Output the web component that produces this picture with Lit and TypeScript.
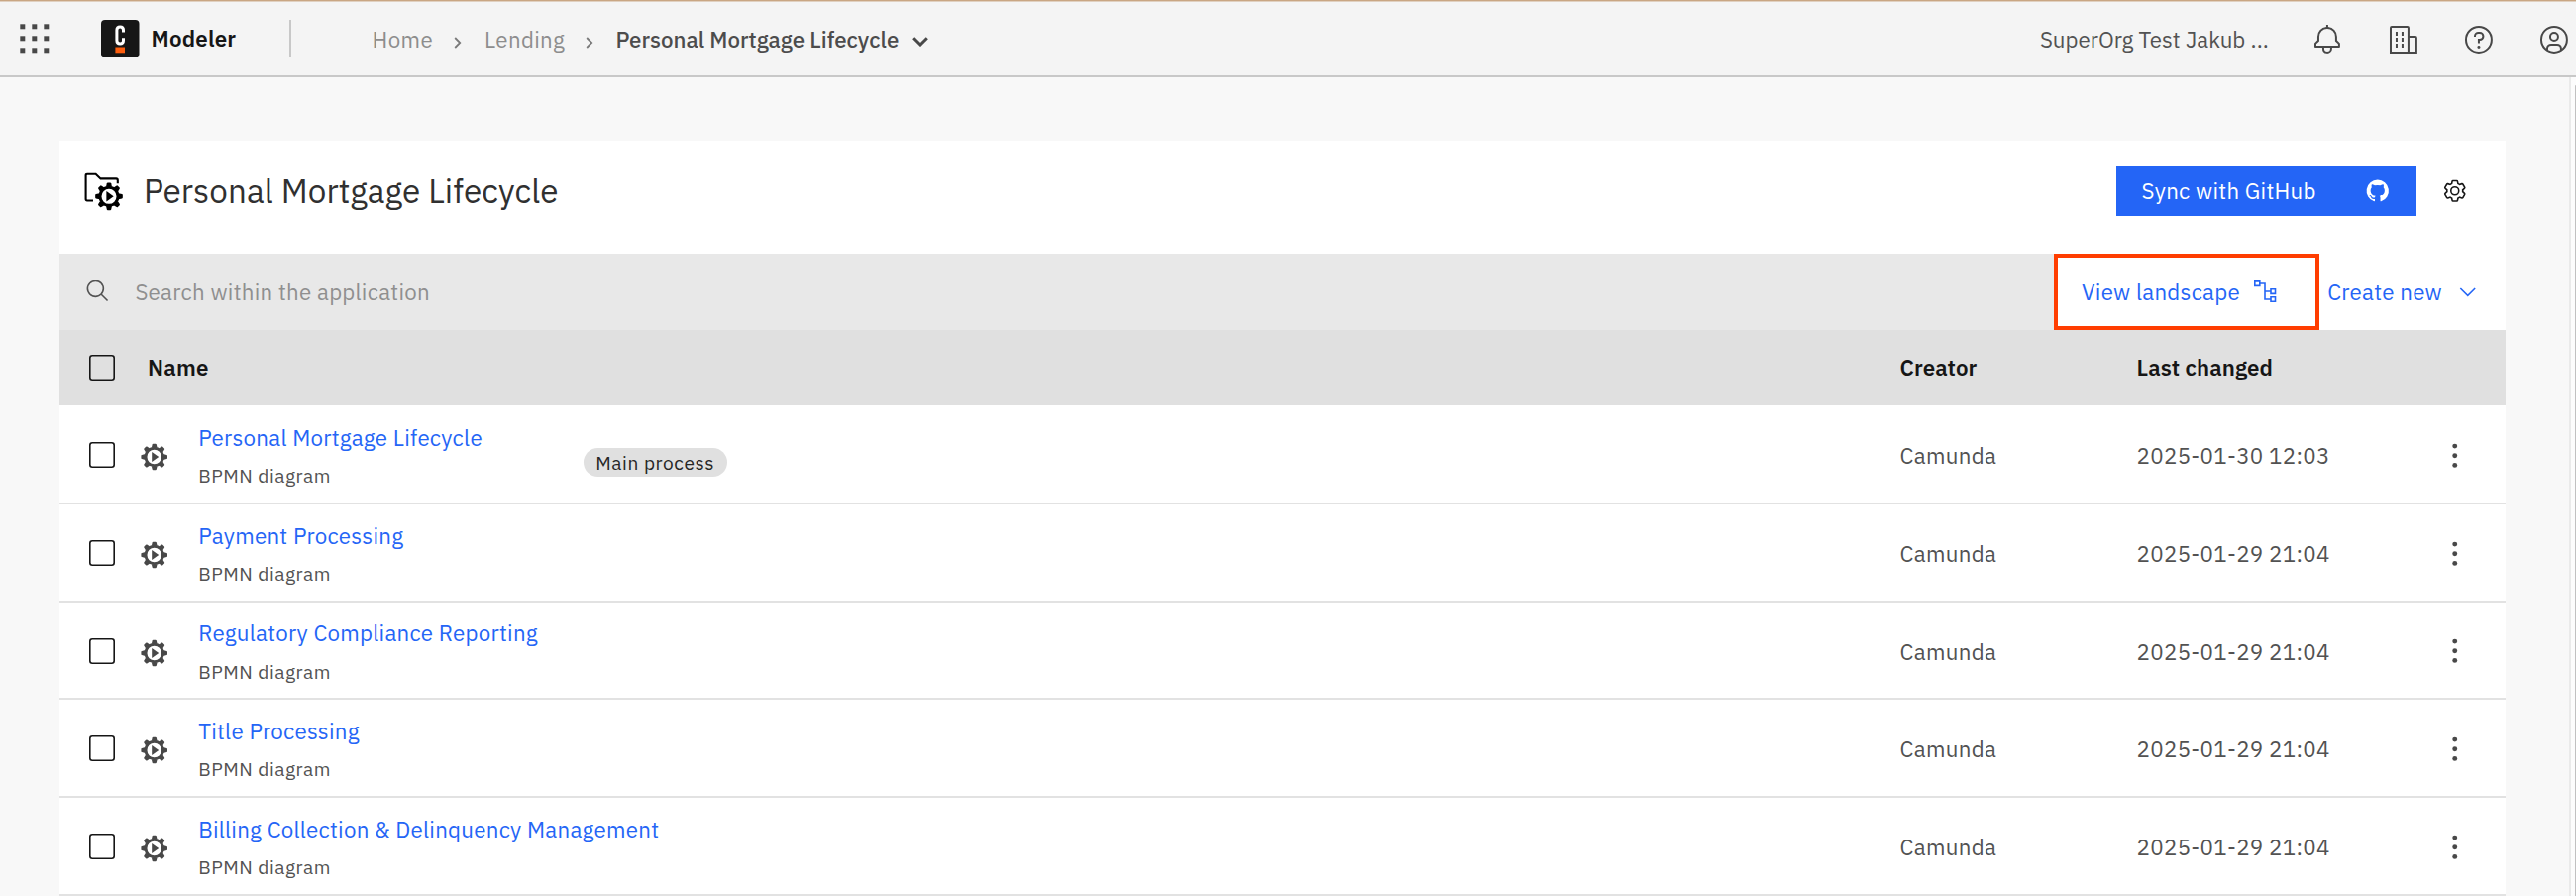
import { LitElement, html, css, svg } from 'lit';
import { customElement, property } from 'lit/decorators.js';

interface FileRow {
  name: string;
  kind: string;
  creator: string;
  changed: string;
  tag?: string;
}

const FILES: FileRow[] = [
  { name: 'Personal Mortgage Lifecycle', kind: 'BPMN diagram', creator: 'Camunda', changed: '2025-01-30 12:03', tag: 'Main process' },
  { name: 'Payment Processing', kind: 'BPMN diagram', creator: 'Camunda', changed: '2025-01-29 21:04' },
  { name: 'Regulatory Compliance Reporting', kind: 'BPMN diagram', creator: 'Camunda', changed: '2025-01-29 21:04' },
  { name: 'Title Processing', kind: 'BPMN diagram', creator: 'Camunda', changed: '2025-01-29 21:04' },
  { name: 'Billing Collection & Delinquency Management', kind: 'BPMN diagram', creator: 'Camunda', changed: '2025-01-29 21:04' },
];

const gear = (cx: number, cy: number, k: number) => svg`
  <g transform="translate(${cx} ${cy}) scale(${k})">
    <circle r="8.7" fill="none" stroke="currentColor" stroke-width="2.9"></circle>
    ${[0, 45, 90, 135, 180, 225, 270, 315].map(
      (a) => svg`<path transform="rotate(${a})" d="M-2.9 -9.2L-2.1 -12.6Q-1.9 -13.3 -1.2 -13.3H1.2Q1.9 -13.3 2.1 -12.6L2.9 -9.2Z" fill="currentColor"></path>`
    )}
    <path d="M-2.5 -5L4.5 0L-2.5 5Z" fill="currentColor"></path>
  </g>`;

const ICONS: Record<string, unknown> = {
  bell: svg`<path d="M28.7071,19.293,26,16.5859V13a10.0136,10.0136,0,0,0-9-9.9492V1H15V3.0508A10.0136,10.0136,0,0,0,6,13v3.5859L3.2929,19.293A1,1,0,0,0,3,20v3a1,1,0,0,0,1,1h7v.7768a5.152,5.152,0,0,0,4.5,5.1987A5.0057,5.0057,0,0,0,21,25V24h7a1,1,0,0,0,1-1V20A1,1,0,0,0,28.7071,19.293ZM19,25a3,3,0,0,1-6,0V24h6Zm8-3H5V20.4141L7.707,17.707A1,1,0,0,0,8,17V13a8,8,0,0,1,16,0v4a1,1,0,0,0,.293.707L27,20.4141Z"/>`,
  enterprise: svg`<path d="M8 8h2v4H8zM8 14h2v4H8zM14 8h2v4h-2zM14 14h2v4h-2zM8 20h2v4H8zM14 20h2v4h-2z"/><path d="M30,14a2,2,0,0,0-2-2H22V4a2,2,0,0,0-2-2H4A2,2,0,0,0,2,4V30H30ZM4,4H20V28H4ZM22,28V14h6V28Z"/>`,
  help: svg`<path d="M16 2a14 14 0 1 0 14 14A14 14 0 0 0 16 2zm0 26a12 12 0 1 1 12-12A12 12 0 0 1 16 28z"/><circle cx="16" cy="23.5" r="1.5"/><path d="M17 8H15.5A4.49 4.49 0 0 0 11 12.5V13h2v-.5A2.5 2.5 0 0 1 15.5 10H17a2.5 2.5 0 0 1 0 5H15v4.5h2V17a4.5 4.5 0 0 0 0-9z"/>`,
  user: svg`<path d="M16 8a5 5 0 1 0 5 5A5 5 0 0 0 16 8zm0 8a3 3 0 1 1 3-3A3 3 0 0 1 16 16z"/><path d="M16 2A14 14 0 1 0 30 16 14.0158 14.0158 0 0 0 16 2ZM10 26.3765V25a3.0033 3.0033 0 0 1 3-3h6a3.0033 3.0033 0 0 1 3 3v1.3765a11.8989 11.8989 0 0 1-12 0Zm13.9925-1.4507A5.0016 5.0016 0 0 0 19 20H13a5.0016 5.0016 0 0 0-4.9925 4.9258 12 12 0 1 1 15.985 0Z"/>`,
  github: svg`<path d="M16,2a14,14,0,0,0-4.43,27.28c.7.13,1-.3,1-.67s0-1.21,0-2.38c-3.89.84-4.71-1.88-4.71-1.88A3.71,3.71,0,0,0,6.24,22.3c-1.27-.86.1-.85.1-.85A2.94,2.94,0,0,1,8.48,22.9a3,3,0,0,0,4.08,1.16,2.93,2.93,0,0,1,.88-1.87c-3.1-.36-6.37-1.56-6.37-6.92a5.4,5.4,0,0,1,1.44-3.76,5,5,0,0,1,.14-3.7s1.17-.38,3.85,1.43a13.3,13.3,0,0,1,7,0c2.67-1.81,3.84-1.43,3.84-1.43a5,5,0,0,1,.14,3.7,5.4,5.4,0,0,1,1.44,3.76c0,5.38-3.27,6.56-6.39,6.91a3.33,3.33,0,0,1,.95,2.59c0,1.87,0,3.38,0,3.84s.25.81,1,.67A14,14,0,0,0,16,2Z"/>`,
  settings: svg`<path d="M27,16.76c0-.25,0-.5,0-.76s0-.51,0-.77l1.92-1.68A2,2,0,0,0,29.3,11L26.94,7a2,2,0,0,0-1.73-1,2,2,0,0,0-.64.1l-2.43.82a11.35,11.35,0,0,0-1.31-.75l-.51-2.52a2,2,0,0,0-2-1.61H13.64a2,2,0,0,0-2,1.61l-.51,2.52a11.48,11.48,0,0,0-1.32.75L7.43,6.06A2,2,0,0,0,6.79,6,2,2,0,0,0,5.06,7L2.7,11a2,2,0,0,0,.41,2.51L5,15.24c0,.25,0,.5,0,.76s0,.51,0,.77L3.11,18.45A2,2,0,0,0,2.7,21L5.06,25a2,2,0,0,0,1.73,1,2,2,0,0,0,.64-.1l2.43-.82a11.35,11.35,0,0,0,1.31.75l.51,2.52a2,2,0,0,0,2,1.61h4.72a2,2,0,0,0,2-1.61l.51-2.52a11.48,11.48,0,0,0,1.32-.75l2.42.82a2,2,0,0,0,.64.1,2,2,0,0,0,1.73-1L29.3,21a2,2,0,0,0-.41-2.51ZM25.21,24l-3.43-1.16a8.86,8.86,0,0,1-2.71,1.57L18.36,28H13.64l-.71-3.55a9.36,9.36,0,0,1-2.7-1.57L6.79,24,4.43,20l2.72-2.4a8.9,8.9,0,0,1,0-3.13L4.43,12,6.79,8l3.43,1.16a8.86,8.86,0,0,1,2.71-1.57L13.64,4h4.72l.71,3.55a9.36,9.36,0,0,1,2.7,1.57L25.21,8,27.57,12l-2.72,2.4a8.9,8.9,0,0,1,0,3.13L27.57,20Z"/><circle cx="16" cy="16" r="5" fill="none" stroke="currentColor" stroke-width="2"/>`,
  search: svg`<path d="M29,27.5859l-7.5521-7.5521a11.0177,11.0177,0,1,0-1.4141,1.4141L27.5859,29ZM4,13a9,9,0,1,1,9,9A9.01,9.01,0,0,1,4,13Z"/>`,
  chevron: svg`<path d="M16 22L6 12 7.4 10.6 16 19.2 24.6 10.6 26 12z"/>`,
  kebab: svg`<circle cx="16" cy="3.9" r="3.1"/><circle cx="16" cy="16" r="3.1"/><circle cx="16" cy="28.1" r="3.1"/>`,
};

@customElement('ui-icon')
class UiIcon extends LitElement {
  @property() name = '';
  static styles = css`
    :host { display: block; flex: none; width: 25.5px; height: 25.5px; }
    svg { display: block; width: 100%; height: 100%; fill: currentColor; }
  `;
  render() {
    return html`<svg viewBox="0 0 32 32">${ICONS[this.name]}</svg>`;
  }
}

@customElement('app-root')
class AppRoot extends LitElement {
  static styles = css`
    :host {
      display: flex; flex-direction: column; box-sizing: border-box;
      width: 2600px; height: 904px; overflow: hidden;
      background: #f8f8f8; color: #525252;
      font-family: 'IBM Plex Sans', 'Noto Sans', sans-serif;
      font-size: 22.3px; line-height: 30px; letter-spacing: 0.255px; white-space: nowrap;
    }
    * { box-sizing: border-box; }
    svg { display: block; flex: none; }

    header {
      flex: none; height: 78px; display: flex; align-items: center;
      padding: 2px 6px 0 20px; background: #f4f4f4;
      border-bottom: 2px solid #c8c8c8;
      box-shadow: inset 0 1px #c9a683, inset 0 2px #e0d0c0;
    }
    .logo { margin-left: 52px; }
    .product { margin: 0 0 0 12px; width: 87.5px; font-weight: 600; letter-spacing: 0.2px; color: #161616; }
    .divider { margin-left: 51.5px; width: 2px; height: 38px; background: #c8c8c8; }
    nav { display: flex; align-items: center; margin-left: 82px; color: #8d8d8d; }
    nav span, .org { margin-top: 2px; }
    .home { width: 82px; letter-spacing: 0.4px; }
    .lending { width: 102px; padding-left: 0.5px; letter-spacing: 0.35px; }
    .sep { margin: 7px 23px 0 0; }
    .current { font-weight: 500; letter-spacing: 0; color: #4c4c4c; width: 299.5px; }
    .caret { margin-top: 5px; }
    .toolbar { margin-left: auto; display: flex; align-items: center; gap: 44.4px; color: #484848; }
    .toolbar ui-icon { width: 31.9px; height: 31.9px; margin-top: 1.6px; }
    .org { width: 230px; letter-spacing: 0; color: #525252; }

    main { flex: 1; min-height: 0; display: flex; }
    .page { flex: 1; padding: 63.5px 64px 0 60px; min-width: 0; }
    .track { width: 7px; background: #fcfcfc; border-left: 2px solid #eaeaea; padding: 8px 0 0 4px; }
    .thumb { height: 900px; background: #c1c1c1; border-radius: 4px 0 0 0; }

    .card { background: #fff; width: 2469px; }
    .title { height: 114.5px; display: flex; align-items: center; padding: 0 38.2px 12px 24px; }
    .title svg { color: #000; margin-top: 0; }
    h1 { margin: 0 0 0 20px; font-size: 33.2px; line-height: 40px; font-weight: 400; letter-spacing: 0.08px; color: #303030; }
    .sync {
      margin-left: auto; width: 303px; height: 51px; padding: 0 26.5px 0 25.3px;
      display: flex; align-items: center; justify-content: space-between;
      background: #2465f6; color: #fff;
    }
    .config { margin-left: 26px; color: #161616; }

    .actions { height: 77px; display: flex; }
    .search { width: 2013px; display: flex; align-items: center; gap: 25.4px; padding: 0 0 1px 25.5px; background: #e8e8e8; color: #525252; }
    .search span { color: #8f8f8f; }
    .actions span { margin-top: 2px; }
    .landscape { width: 268px; border: 4px solid #ff3d00; display: flex; align-items: center; gap: 13.2px; padding: 0 0 1px 24px; color: #2465f6; }
    .create { flex: 1; display: flex; align-items: center; justify-content: space-between; padding: 0 25.6px 1px 8.2px; color: #2465f6; }
    .create ui-icon { margin-top: 1px; }

    .row { display: grid; grid-template-columns: 80px 1777.6px 239px 308.6px auto; align-items: center; }
    .head { height: 76px; background: #e0e0e0; font-weight: 600; letter-spacing: 0.06px; color: #161616; }
    .head .n { margin-left: 9px; letter-spacing: 0.2px; }
    .body { padding-top: 1.4px; }
    .file { height: 98.7px; border-bottom: 2px solid #e2e2e2; }
    .box { margin-left: 30px; }
    .file .box { margin-top: 0.8px; }
    .entry { display: grid; grid-template-columns: 60.2px 389px auto; align-items: center; }
    .entry svg { margin-top: 5px; color: #484848; }
    .names { margin-top: 5px; }
    .link { color: #2465f6; line-height: 38.3px; }
    .kind { font-size: 19.1px; line-height: 38.3px; letter-spacing: 0.52px; }
    .tag { justify-self: start; margin-top: 15px; height: 29px; width: 145px; line-height: 29px; padding-left: 12px; border-radius: 15px; background: #e0e0e0; color: #262626; font-size: 19.1px; letter-spacing: 0.58px; }
    .meta { margin-top: 3px; letter-spacing: 0.31px; }
    .file ui-icon { color: #484848; margin-top: 2px; }
  `;

  private sep() {
    return html`<svg class="sep" width="8" height="12" viewBox="0 0 8 12"><path d="M1.2 1L6.2 6L1.2 11" fill="none" stroke="#7a7a7a" stroke-width="1.8"></path></svg>`;
  }

  private box() {
    return html`<svg class="box" width="26" height="26" viewBox="0 0 26 26"><rect x="0.8" y="0.8" width="24.4" height="24.4" rx="2.4" fill="none" stroke="#161616" stroke-width="1.6"></rect></svg>`;
  }

  private file(f: FileRow) {
    return html`<div class="row file">
      ${this.box()}
      <div class="entry">
        <svg width="30" height="30" viewBox="0 0 30 30">${gear(15.7, 15, 1)}</svg>
        <div class="names">
          <div class="link">${f.name}</div>
          <div class="kind">${f.kind}</div>
        </div>
        ${f.tag ? html`<span class="tag">${f.tag}</span>` : ''}
      </div>
      <span class="meta">${f.creator}</span>
      <span class="meta">${f.changed}</span>
      <ui-icon name="kebab"></ui-icon>
    </div>`;
  }

  render() {
    return html`
      <header>
        <svg width="30" height="30" viewBox="0 0 30 30" fill="#484848">
          ${[0.3, 12.3, 24.3].map((y) => [0.3, 12.3, 24.3].map((x) => svg`<rect x=${x} y=${y} width="5" height="5"></rect>`))}
        </svg>
        <svg class="logo" width="38.5" height="38.5" viewBox="0 0 38.5 38.5">
          <rect width="38.5" height="38.5" rx="4" fill="#161616"></rect>
          <path d="M22.5 12.5V10.3Q22.5 7 19.2 7T15.9 10.3V20.7Q15.9 24 19.2 24T22.5 20.7V18.3" fill="none" stroke="#fff" stroke-width="3"></path>
          <rect x="14.4" y="27.5" width="9.6" height="5.8" fill="#fc5d0d"></rect>
        </svg>
        <span class="product">Modeler</span>
        <span class="divider"></span>
        <nav>
          <span class="home">Home</span>${this.sep()}
          <span class="lending">Lending</span>${this.sep()}
          <span class="current">Personal Mortgage Lifecycle</span>
          <svg class="caret" width="16" height="10" viewBox="0 0 16 10"><path d="M1.2 1.3L8 8L14.8 1.3" fill="none" stroke="#484848" stroke-width="3"></path></svg>
        </nav>
        <div class="toolbar">
          <span class="org">SuperOrg Test Jakub ...</span>
          <ui-icon name="bell"></ui-icon>
          <ui-icon name="enterprise"></ui-icon>
          <ui-icon name="help"></ui-icon>
          <ui-icon name="user"></ui-icon>
        </div>
      </header>
      <main>
        <div class="page">
          <div class="card">
            <div class="title">
              <svg width="41" height="40" viewBox="0 0 41 40">
                <path d="M10 29.5H4Q2.6 29.5 2.6 28V4.2Q2.6 2.7 4 2.7H12.6L17.5 7.4H33.3Q34.8 7.4 34.8 8.9V12.2" fill="none" stroke="currentColor" stroke-width="2.1"></path>
                ${gear(26, 25.3, 1.04)}
              </svg>
              <h1>Personal Mortgage Lifecycle</h1>
              <div class="sync"><span>Sync with GitHub</span><ui-icon name="github"></ui-icon></div>
              <ui-icon class="config" name="settings"></ui-icon>
            </div>
            <div class="actions">
              <div class="search"><ui-icon name="search"></ui-icon><span>Search within the application</span></div>
              <div class="landscape">
                <span>View landscape</span>
                <svg width="24" height="24" viewBox="0 0 24 24" fill="none" stroke="currentColor" stroke-width="1.6">
                  <path d="M1.8 1.9h5v4.5h-5zM18 9.8h4.5v4.6H18zM18 17.7h4.5v4.5H18zM7 4h5v16h6M12 12h6"></path>
                </svg>
              </div>
              <div class="create"><span>Create new</span><ui-icon name="chevron"></ui-icon></div>
            </div>
            <div class="row head">
              ${this.box()}
              <span class="n">Name</span><span>Creator</span><span>Last changed</span>
            </div>
            <div class="body">${FILES.map((f) => this.file(f))}</div>
          </div>
        </div>
        <div class="track"><div class="thumb"></div></div>
      </main>
    `;
  }
}
